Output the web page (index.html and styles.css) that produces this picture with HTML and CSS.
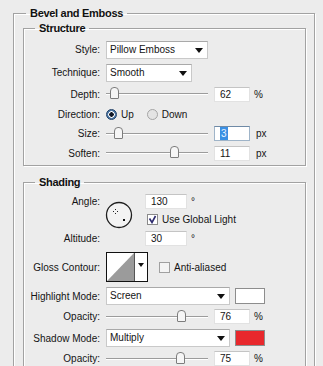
FILE: index.html
```html
<!DOCTYPE html>
<html lang="en">
<head>
	<meta charset="UTF-8">
	<title>Bevel and Emboss</title>
	<link rel="stylesheet" href="styles.css">
</head>
<body>
	<fieldset class="group">
		<legend>Bevel and Emboss</legend>

		<fieldset class="sub structure">
			<legend>Structure</legend>
			<div class="row row-tall">
				<label>Style:</label>
				<div class="select select-style"><span>Pillow Emboss</span><i class="arrow"></i></div>
			</div>
			<div class="row row-tall">
				<label>Technique:</label>
				<div class="select select-tech"><span>Smooth</span><i class="arrow"></i></div>
			</div>
			<div class="row">
				<label>Depth:</label>
				<div class="slider"><span class="thumb" style="left: 4px"></span></div>
				<div class="num">62</div>
				<span class="unit">%</span>
			</div>
			<div class="row">
				<label>Direction:</label>
				<span class="radio checked"></span><span class="opt">Up</span>
				<span class="radio radio-down"></span><span class="opt">Down</span>
			</div>
			<div class="row row-short">
				<label>Size:</label>
				<div class="slider"><span class="thumb" style="left: 8px"></span></div>
				<div class="num num-focus"><span class="sel">3</span></div>
				<span class="unit unit-px">px</span>
			</div>
			<div class="row">
				<label>Soften:</label>
				<div class="slider"><span class="thumb" style="left: 64px"></span></div>
				<div class="num">11</div>
				<span class="unit unit-px">px</span>
			</div>
		</fieldset>

		<fieldset class="sub shading">
			<legend>Shading</legend>
			<div class="angle">
				<label class="angle-label">Angle:</label>
				<svg class="dial" width="28" height="28" viewBox="0 0 28 28">
					<circle cx="14" cy="14" r="12.5" fill="#f3f3f3" stroke="#1e1e1e" stroke-width="1.3"/>
					<rect x="10" y="8" width="1" height="1" fill="#222"/>
					<rect x="8" y="10" width="1" height="1" fill="#222"/>
					<rect x="12" y="10" width="1" height="1" fill="#222"/>
					<rect x="10" y="12" width="1" height="1" fill="#222"/>
					<rect x="18" y="18" width="2" height="2" fill="#111"/>
				</svg>
				<div class="angle-val"><div class="num num-angle">130</div><span class="unit">&deg;</span></div>
				<div class="angle-check"><span class="check"><svg width="9" height="9" viewBox="0 0 9 9"><path d="M1.5 3.5 L4 7.5 L7.5 1" fill="none" stroke="#2d2a6e" stroke-width="1.6"/></svg></span><span class="opt">Use Global Light</span></div>
				<label class="alt-label">Altitude:</label>
				<div class="alt-val"><div class="num num-angle">30</div><span class="unit">&deg;</span></div>
			</div>
			<div class="row row-gloss">
				<label>Gloss Contour:</label>
				<svg class="contour" width="42" height="30" viewBox="0 0 42 30">
					<rect x="0.5" y="0.5" width="41" height="29" fill="#fff" stroke="#111"/>
					<polygon points="1,29 28,1 28,29" fill="#9b9b9b"/>
					<line x1="28.5" y1="1" x2="28.5" y2="29" stroke="#555"/>
					<polygon points="32,11 38,11 35,15" fill="#111"/>
				</svg>
				<span class="check check-aa"></span><span class="opt">Anti-aliased</span>
			</div>
			<div class="row row-mode">
				<label>Highlight Mode:</label>
				<div class="select select-mode"><span>Screen</span><i class="arrow"></i></div>
				<span class="swatch swatch-white"></span>
			</div>
			<div class="row row-op">
				<label>Opacity:</label>
				<div class="slider"><span class="thumb" style="left: 71px"></span></div>
				<div class="num">76</div>
				<span class="unit">%</span>
			</div>
			<div class="row row-mode">
				<label>Shadow Mode:</label>
				<div class="select select-mode"><span>Multiply</span><i class="arrow"></i></div>
				<span class="swatch swatch-red"></span>
			</div>
			<div class="row row-op">
				<label>Opacity:</label>
				<div class="slider"><span class="thumb" style="left: 70px"></span></div>
				<div class="num">75</div>
				<span class="unit">%</span>
			</div>
		</fieldset>
	</fieldset>
</body>
</html>
```

FILE: styles.css
```css
* {
	margin: 0;
	padding: 0;
	box-sizing: border-box;
}
html {
	overflow: hidden;
}
body {
	width: 323px;
	height: 366px;
	overflow: hidden;
	background-color: #ececec;
	font-family: "Liberation Sans", Arial, sans-serif;
	font-size: 10px;
	color: #141414;
}
fieldset {
	border: 1px solid #a2a2a2;
	box-shadow: inset 1px 1px 0 #fff, 1px 1px 0 #fff;
}
legend {
	font-size: 11px;
	font-weight: bold;
	line-height: 14px;
	height: 14px;
	letter-spacing: -0.3px;
	padding: 0 4px;
	color: #111;
}
.group {
	width: 302px;
	height: 362px;
	margin: 6px 0 0 13px;
	padding: 1px 8px 0 9px;
}
.group > legend {
	margin-left: 3px;
}
.sub {
	width: 283px;
	padding: 0;
}
.sub > legend {
	margin-left: 11px;
}
.structure {
	padding: 3px 0 2px 0;
}
.shading {
	margin-top: 9px;
	height: 193px;
	padding-top: 4px;
}

/* rows */
.row {
	display: flex;
	align-items: center;
	height: 20px;
}
.row-tall {
	height: 23px;
}
.row-short {
	height: 19px;
}
.row label,
.angle label {
	width: 76px;
	margin-right: 6px;
	text-align: right;
	white-space: nowrap;
}

/* select boxes */
.select {
	position: relative;
	height: 18px;
	line-height: 16px;
	padding-left: 3px;
	background-color: #fff;
	border: 1px solid #c9c9c9;
	border-top-color: #a9a9a9;
}
.select-style {
	width: 102px;
}
.select-tech {
	width: 86px;
}
.select-mode {
	width: 124px;
}
.select .arrow {
	position: absolute;
	right: 4px;
	top: 6px;
	width: 0;
	height: 0;
	border-left: 4px solid transparent;
	border-right: 4px solid transparent;
	border-top: 5px solid #111;
}

/* sliders */
.slider {
	position: relative;
	width: 102px;
	height: 2px;
	border-top: 1px solid #9c9c9c;
	border-bottom: 1px solid #fff;
}
.thumb {
	position: absolute;
	top: -7px;
	width: 9px;
	height: 12px;
	background-color: #f6f6f6;
	border: 1px solid #7d7d7d;
	border-radius: 4px 4px 1px 1px;
}

/* numeric fields */
.num {
	width: 36px;
	height: 15px;
	line-height: 13px;
	margin-left: 6px;
	padding-left: 5px;
	background-color: #fff;
	border: 1px solid #e2e2e2;
	border-top-color: #c4c4c4;
}
.num-focus {
	border-color: #9fb4c8;
	border-top-color: #6f8aa6;
}
.num-focus .sel {
	display: inline-block;
	padding: 0 1px;
	background-color: #3a8fe3;
	color: #e8f2ff;
}
.unit {
	margin-left: 4px;
}
.unit-px {
	margin-left: 6px;
}

/* radio / check */
.radio {
	width: 11px;
	height: 11px;
	border-radius: 50%;
	border: 1px solid #a5a5a5;
	background-color: #e4e4e4;
}
.radio.checked {
	border-color: #1f3f66;
	background: radial-gradient(circle, #101828 0, #101828 2px, #fff 2.5px, #fff 3px, #4f7aa8 3.5px);
}
.radio-down {
	margin-left: 13px;
}
.opt {
	margin-left: 4px;
}
.check {
	display: inline-flex;
	align-items: center;
	justify-content: center;
	width: 11px;
	height: 11px;
	background-color: #fff;
	border: 1px solid #8a8a8a;
}
.check-aa {
	margin-left: 11px;
	background-color: #f4f4f4;
	border-color: #a0a0a0;
}

/* angle block */
.angle {
	display: grid;
	grid-template-columns: 82px 39px auto;
	grid-template-rows: 16px 21px 16px;
	align-items: center;
}
.angle-label {
	grid-column: 1;
	grid-row: 1;
}
.alt-label {
	grid-column: 1;
	grid-row: 3;
}
.dial {
	grid-column: 2;
	grid-row: 1 / 4;
	align-self: start;
	margin-top: 8px;
	margin-left: -1px;
}
.angle-val,
.alt-val,
.angle-check {
	grid-column: 3;
	display: flex;
	align-items: center;
}
.angle-val {
	grid-row: 1;
}
.angle-check {
	grid-row: 2;
	padding-left: 2px;
}
.alt-val {
	grid-row: 3;
}
.num-angle {
	width: 42px;
	margin-left: 0;
}

.row-gloss {
	height: 30px;
	margin-top: 6px;
}
.row-mode {
	height: 22px;
	margin-top: 3px;
}
.row-op {
	height: 19px;
}
.row-op + .row-mode {
	margin-top: 1px;
}
.swatch {
	width: 30px;
	height: 16px;
	margin-left: 5px;
	border: 1px solid #8d8d8d;
}
.swatch-white {
	background-color: #fff;
}
.swatch-red {
	background-color: #e8282c;
}
```
